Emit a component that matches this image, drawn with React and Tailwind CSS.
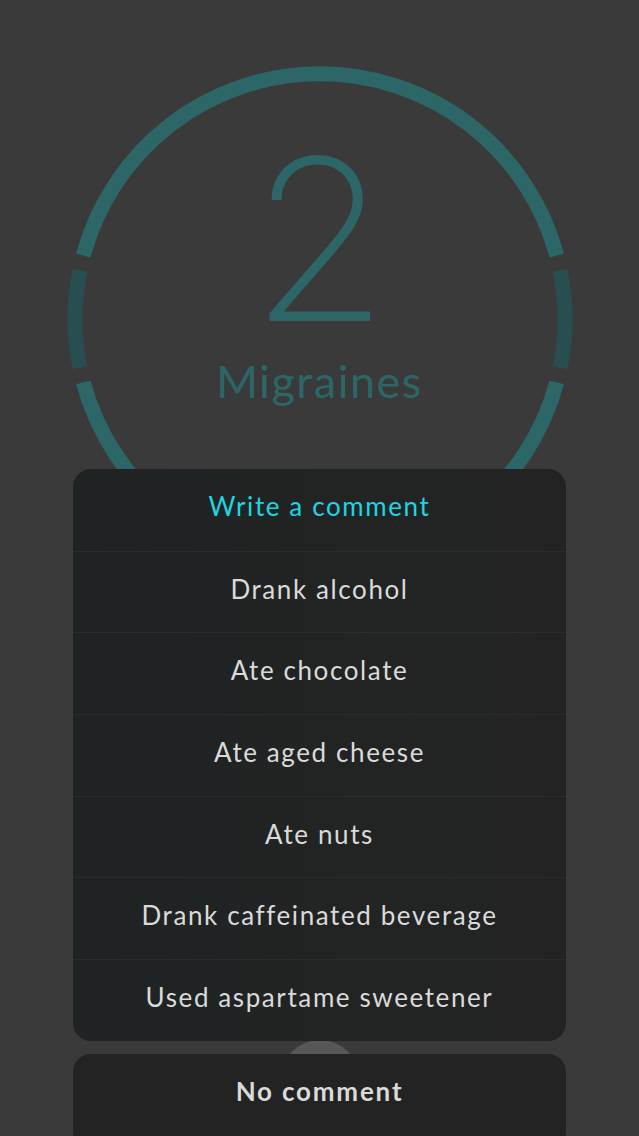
import React from 'react'

const options = [
  'Drank alcohol',
  'Ate chocolate',
  'Ate aged cheese',
  'Ate nuts',
  'Drank caffeinated beverage',
  'Used aspartame sweetener',
]

const Gauge = () => (
  <svg width="639" height="640" viewBox="0 0 639 640" className="absolute left-0 top-0">
    <g fill="none" strokeWidth="15">
      <path d="M 83.3 255.6 A 245 245 0 0 1 556.7 255.6" stroke="#2c6667" />
      <path d="M 560.1 270.2 A 245 245 0 0 1 560.1 367.8" stroke="#284e50" />
      <path d="M 556.7 382.4 A 245 245 0 0 1 83.3 382.4" stroke="#2c6667" />
      <path d="M 79.9 367.8 A 245 245 0 0 1 79.9 270.2" stroke="#284e50" />
    </g>
  </svg>
)

export default function App() {
  return (
    <div
      className="relative h-[1136px] w-[639px] overflow-hidden bg-[#3a3a3a]"
      style={{ fontFamily: 'Lato, "Noto Sans", sans-serif' }}
    >
      {/* background screen */}
      <div className="relative h-[640px]">
        <Gauge />
        <div className="relative flex flex-col items-center pt-[127px]">
          <div className="h-[225px] font-['Inter',sans-serif] text-[225px] font-extralight leading-none text-[#2c6667]">2</div>
          <div className="mt-[7px] text-[45px] leading-none tracking-[1.5px] text-[#2c6667]">Migraines</div>
        </div>
      </div>
      <div className="absolute left-[280px] top-[1040px] h-[80px] w-[80px] rounded-full bg-[#575757]" />

      {/* action sheet */}
      <div className="absolute inset-x-[73px] top-[469px] flex flex-col gap-[13px]">
        <div className="overflow-hidden rounded-[18px] bg-gradient-to-r from-[#1f2323] via-[#222424] to-[#232323]">
          <button className="flex h-[81.7px] w-full items-center justify-center pb-[6px] text-[26px] tracking-[1.6px] text-[#1fd5e2]">
            Write a comment
          </button>
          {options.map((label) => (
            <button
              key={label}
              className="flex h-[81.7px] w-full items-center justify-center border-t border-[#2c2c2c] pb-[6px] text-[26px] tracking-[1.6px] text-[#dadada]"
            >
              {label}
            </button>
          ))}
        </div>
        <button className="flex h-[96px] w-full items-start justify-center rounded-[18px] bg-[#232323] pt-[18px] text-[26px] font-bold tracking-[1.8px] text-[#dadada]">
          No comment
        </button>
      </div>
    </div>
  )
}
